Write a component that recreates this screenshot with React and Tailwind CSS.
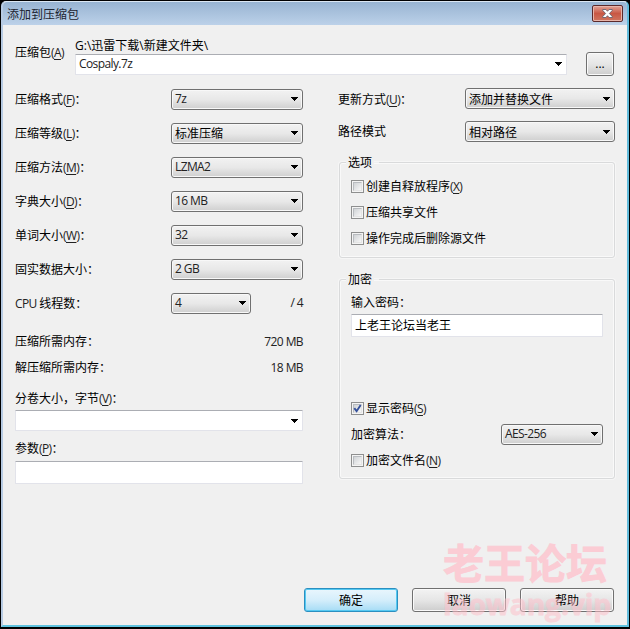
import clsx from "clsx";

// Latin runs are set a little tighter than the Chinese text around them
function Latin({ children, className }) {
  return (
    <span className={clsx("inline-block whitespace-pre tracking-[-0.6px] text-[#222]", className)}>
      {children}
    </span>
  );
}

function Label({ text, hotkey, colon = true }) {
  return (
    <span className="whitespace-nowrap">
      {text}
      {hotkey ? (
        <Latin>
          (<span className="underline underline-offset-2">{hotkey}</span>)
        </Latin>
      ) : null}
      {colon ? "：" : null}
    </span>
  );
}

function Arrow() {
  return (
    <svg width="7" height="4" viewBox="0 0 7 4" className="shrink-0" shapeRendering="crispEdges">
      <path d="M0 0h7v1H6v1H5v1H4v1H3V3H2V2H1V1H0z" fill="#000" />
    </svg>
  );
}

function Select({ value, className, cjk }) {
  return (
    <div
      className={clsx(
        "flex h-[21px] shrink-0 items-center justify-between rounded-[3px] border border-[#707070] bg-linear-to-b from-[#f2f2f2] from-0% via-[#e8e8e8] via-50% to-[#cfcfcf] to-100% pr-[4px] pl-[3px] shadow-[inset_0_0_0_1px_#f8f8f8]",
        className
      )}
    >
      {cjk ? <span className="pt-[2px] whitespace-nowrap">{value}</span> : <Latin>{value}</Latin>}
      <Arrow />
    </div>
  );
}

function Field({ className, children }) {
  return (
    <div
      className={clsx(
        "flex shrink-0 items-center justify-between rounded-[1px] border border-[#e2e3ea] border-t-[#abadb3] bg-white pl-[3px]",
        className
      )}
    >
      {children}
    </div>
  );
}

function Check({ checked, text, hotkey }) {
  return (
    <div className="flex h-[26px] items-center gap-[2px]">
      <span className="flex size-[13px] shrink-0 items-center justify-center border border-[#8e8f8f] bg-[#f4f4f4] p-px">
        <span className="flex size-[9px] items-center justify-center border border-[#b9bcc0] border-r-[#e4e4e4] border-b-[#e4e4e4] bg-linear-to-br from-[#d0d3d6] to-[#f7f7f7]">
          {checked ? (
            <svg width="9" height="9" viewBox="0 0 9 9" className="shrink-0">
              <path d="M1.3 4.2 3.6 7.2 7.7 1" fill="none" stroke="#35519b" strokeWidth="1.9" />
            </svg>
          ) : null}
        </span>
      </span>
      <span className="pt-px">
        <Label text={text} hotkey={hotkey} colon={false} />
      </span>
    </div>
  );
}

function Group({ title, className, children }) {
  return (
    <fieldset
      className={clsx(
        "rounded-[3px] border border-[#d9dadb] pr-[11px] pl-[11px] shadow-[inset_0_0_0_1px_#f9f9f9,0_0_0_1px_#f6f6f6]",
        className
      )}
    >
      <legend className="relative -left-[5px] h-4 bg-[#f0f0f0] px-[2px] leading-[18px]">{title}</legend>
      {children}
    </fieldset>
  );
}

function Button({ children, primary }) {
  return (
    <button
      className={clsx(
        "h-6 w-[94px] rounded-[3px] border pt-px",
        primary
          ? "border-[#2b8fc0] bg-linear-to-b from-[#e9f6fd] from-0% via-[#d5eefb] via-50% to-[#a5dcf5] to-100% shadow-[inset_0_0_0_1px_#55c9f2]"
          : "border-[#707070] bg-linear-to-b from-[#f3f3f3] from-0% via-[#e6e6e6] via-50% to-[#cdcdcd] to-100% shadow-[inset_0_0_0_1px_#fafafa]"
      )}
    >
      {children}
    </button>
  );
}

const settings = [
  { text: "压缩格式", hotkey: "F", value: "7z" },
  { text: "压缩等级", hotkey: "L", value: "标准压缩", cjk: true },
  { text: "压缩方法", hotkey: "M", value: "LZMA2" },
  { text: "字典大小", hotkey: "D", value: "16 MB" },
  { text: "单词大小", hotkey: "W", value: "32" },
  { text: "固实数据大小", value: "2 GB" },
];

function TitleBar() {
  return (
    <div className="flex h-[23px] shrink-0 items-center justify-between rounded-t-[4px] bg-linear-to-b from-[#98b4d2] to-[#bcd1e9] pr-[4px] pl-[4px]">
      <span className="pt-[2px] text-[#1c2430]">添加到压缩包</span>
      <button className="flex h-[17px] w-[31px] items-center justify-center rounded-[2px] border border-[#5b2a2b] bg-linear-to-b from-[#e0a397] from-0% via-[#c85744] via-50% to-[#cf7560] to-100% shadow-[inset_0_0_0_1px_#e8b5aa]">
        <svg width="11" height="9" viewBox="0 0 11 9">
          <path
            d="M.8.5h3.1l1.6 1.8L7.1.5h3.1v1L7.4 4.5l2.8 3v1H7.1L5.5 6.7 3.9 8.5H.8v-1l2.8-3-2.8-3z"
            fill="#fff"
            stroke="#55596a"
            strokeWidth=".8"
          />
        </svg>
      </button>
    </div>
  );
}

function ArchiveRow() {
  return (
    <div className="flex h-[57px] shrink-0 items-start">
      <div className="mt-[20px] w-[60px] leading-4">
        <Label text="压缩包" hotkey="A" colon={false} />
      </div>
      <div className="w-[492px] pt-[13px]">
        <div className="h-[16px] leading-4 whitespace-nowrap">
          G:\迅雷下载\新建文件夹\
        </div>
        <Field className="h-[21px] pr-[4px] pb-px">
          <Latin>Cospaly.7z</Latin>
          <Arrow />
        </Field>
      </div>
      <button className="mt-[27px] ml-[19px] h-6 w-[28px] rounded-[3px] border border-[#707070] bg-linear-to-b from-[#f3f3f3] from-0% via-[#e6e6e6] via-50% to-[#cdcdcd] to-100% leading-5 shadow-[inset_0_0_0_1px_#fafafa]">
        ...
      </button>
    </div>
  );
}

function LeftColumn() {
  return (
    <div className="w-[288px]">
      {settings.map((s) => (
        <div key={s.text} className="flex h-[34px] items-center justify-between">
          <div className="pt-[2px]">
            <Label text={s.text} hotkey={s.hotkey} />
          </div>
          <Select value={s.value} cjk={s.cjk} className="w-[132px]" />
        </div>
      ))}
      <div className="flex h-[34px] items-center">
        <span className="w-[156px] pt-[2px]">
          <Latin className="tracking-[-0.4px]">CPU </Latin>线程数：
        </span>
        <Select value="4" className="w-[80px]" />
        <Latin className="ml-auto">/ 4</Latin>
      </div>
      <div className="mt-[9px] flex h-[26px] items-center justify-between">
        <Label text="压缩所需内存" />
        <Latin>720 MB</Latin>
      </div>
      <div className="flex h-[26px] items-center justify-between">
        <Label text="解压缩所需内存" />
        <Latin>18 MB</Latin>
      </div>
      <div className="mt-[10px] h-[19px] leading-4">
        <Label text="分卷大小，字节" hotkey="V" />
      </div>
      <Field className="h-[21px] justify-end pr-[4px]">
        <Arrow />
      </Field>
      <div className="mt-[10px] h-[20px] leading-4">
        <Label text="参数" hotkey="P" />
      </div>
      <Field className="h-[23px]" />
    </div>
  );
}

function RightColumn() {
  return (
    <div className="ml-[35px] w-[277px]">
      <div className="flex h-[33px] items-center justify-between">
        <div className="pt-[2px]">
          <Label text="更新方式" hotkey="U" />
        </div>
        <Select value="添加并替换文件" cjk className="w-[150px]" />
      </div>
      <div className="flex h-[33px] items-center justify-between">
        <Label text="路径模式" colon={false} />
        <Select value="相对路径" cjk className="w-[150px]" />
      </div>
      <Group title="选项" className="mt-[6px] ml-px h-[104px]">
        <div className="pt-[3px]">
          <Check text="创建自释放程序" hotkey="X" />
          <Check text="压缩共享文件" />
          <Check text="操作完成后删除源文件" />
        </div>
      </Group>
      <Group title="加密" className="mt-[13px] ml-px h-[208px]">
        <div className="mt-[8px] h-[19px] leading-4">
          <Label text="输入密码" />
        </div>
        <Field className="h-[23px]">上老王论坛当老王</Field>
        <div className="mt-[58px]">
          <Check checked text="显示密码" hotkey="S" />
          <div className="flex h-[26px] items-center justify-between">
            <div className="pt-px">
              <Label text="加密算法" />
            </div>
            <Select value="AES-256" className="w-[102px]" />
          </div>
          <Check text="加密文件名" hotkey="N" />
        </div>
      </Group>
    </div>
  );
}

export default function App() {
  return (
    <div
      lang="zh-CN"
      className="relative h-[629px] w-[630px] overflow-hidden bg-black pt-px pr-px pb-[2px] pl-px font-['Open_Sans','Noto_Sans_CJK_SC',sans-serif] text-[12px] leading-4 text-black"
    >
      <div className="flex h-full flex-col rounded-t-[5px] border-t border-r-2 border-b-2 border-l-2 border-t-[#dbe7f3] border-r-[#62bcdc] border-b-[#5fc3df] border-l-[#b7cbe3] bg-[#f0f0f0]">
        <TitleBar />
        <div className="flex flex-1 flex-col pl-[12px]">
          <ArchiveRow />
          <div className="flex">
            <LeftColumn />
            <RightColumn />
          </div>
          <div className="mt-auto mb-[13px] flex gap-[14px] pl-[289px]">
            <Button primary>确定</Button>
            <Button>取消</Button>
            <Button>帮助</Button>
          </div>
        </div>
      </div>
      {/* forum watermark */}
      <div className="pointer-events-none absolute top-[541px] left-[443px] font-bold whitespace-nowrap text-[#ffc0cb] opacity-75 [-webkit-text-stroke:0.8px_#ffc0cb]">
        <div className="h-[44px] text-[41px] leading-[44px]">老王论坛</div>
        <div className="text-[28px] leading-[38px] opacity-70">laowang.vip</div>
      </div>
    </div>
  );
}
